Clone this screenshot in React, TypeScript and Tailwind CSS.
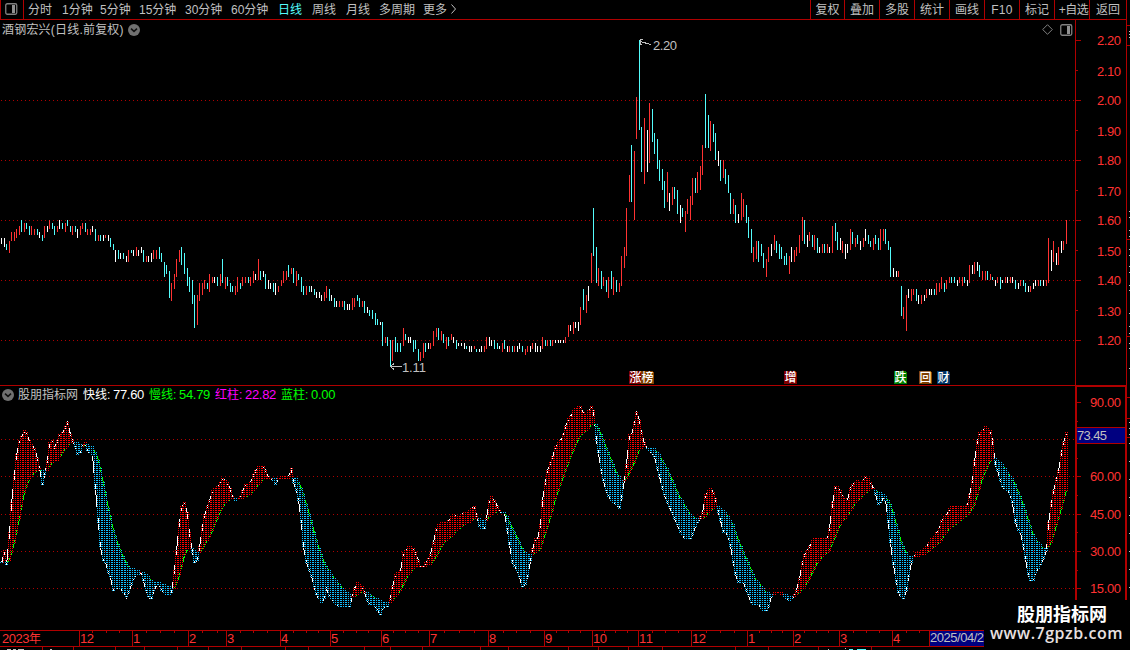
import React from "react";

const FONT = "font-['Liberation_Sans','Noto_Sans_CJK_SC',sans-serif]";
const LINE = "#b00000";
const LABEL = "#ff3232";
const MUTED = "#c0c0c0";

// x, colour (r up, c down, w flat), high-low in cents
const BARS = `
1w154-152 4w154-151 6c152-150 9r153-149 11r156-153 14r156-153 16r157-154 19r158-155 21c160-156 24r159-156
26c159-157 29c158-155 31r158-155 34r157-155 37c157-155 39w156-154 42c155-153 44r158-154 47w158-156 49r160-157
52c159-157 54c158-155 57r158-156 59w160-157 62c159-157 65r159-156 67c160-158 70c158-156 72r158-155 75c158-156
77w157-154 80r158-155 82r159-157 85c159-156 87r157-155 90r157-155 92w158-156 95c157-153 98r155-153 100c155-153
103w155-153 105r155-154 108w155-153 110c154-151 113c152-150 115w150-146 118c150-147 120w149-147 123c149-147
126w148-146 128r150-146 131c150-149 133w150-148 136r151-148 138w150-148 141w151-149 143c150-146 146r148-146
148w148-146 151w149-146 153r150-147 156r150-147 159c151-147 161c149-146 164c146-141 166c145-142 169c143-134
171r139-133 174r142-137 176r147-141 179r150-146 181c151-145 184c149-142 187c144-138 189c141-136 192c140-132
194c135-124 197r135-125 199r139-133 202r139-135 204r140-137 207c139-137 209r142-136 212r141-139 214w141-139
217c141-138 220r142-138 222c147-139 225r141-137 227c141-138 230c139-136 232c138-136 235r138-135 237r141-136
240c139-137 242r141-138 245r141-139 248c141-139 250r141-138 253r143-139 255w142-140 258r147-140 260c143-140
263w143-141 265c142-137 268w140-137 270w139-137 273c139-136 275w139-135 278r138-136 281r140-138 283r143-139
286r143-140 288c145-141 291r144-142 293c144-139 296r143-138 298c142-140 301c141-136 303c138-135 306r138-135
309c138-136 311w138-136 314c137-135 316w136-134 319w136-134 321w135-133 324r136-133 326r138-134 329c137-133
331w135-133 334c134-131 336w133-131 339r133-131 342r133-131 344c133-130 347w132-130 349w132-130 352r134-130
354r134-131 357c135-133 359c134-131 362r133-131 364c133-129 367w131-129 369c130-128 372c130-127 375c129-125
377c127-125 380w126-125 382c126-118 385r121-119 387c121-118 390c120-111 392r120-113 395c121-116 397c119-116
400c119-116 403r124-118 405c122-120 408w121-119 410w121-119 413c120-116 415c120-117 418c117-113 420r116-113
423r119-114 425c119-116 428w119-117 430r119-117 433r123-118 436r124-121 438c124-120 441r123-120 443c122-119
446r121-117 448c121-118 451r122-120 453w121-119 456c120-117 458w119-118 461w119-118 464w119-117 466c118-117
469w118-116 471w118-116 474r118-117 476c117-116 479w117-116 481w118-116 484r118-116 486r121-117 489w121-118
491w120-118 494c120-117 497c119-117 499w118-117 502r119-116 504c120-117 507w118-116 509r118-116 512c118-116
514r118-116 517w118-116 519w119-117 522c118-116 525r117-115 527r118-116 530w118-116 532r119-117 535w119-116
537w118-116 540w118-116 542r121-117 545c120-118 547r120-118 550c120-118 552r120-118 555w120-119 558w120-119
560w120-119 563w120-119 565r121-119 568r125-121 570w125-123 573r126-122 575w126-124 578w126-123 580r131-125
583c137-130 586r135-129 588w138-133 591r149-139 593c164-148 596c151-139 598r144-138 601c143-137 603r141-138
606c140-136 608r141-134 611c143-137 613r141-135 616c140-136 619r139-136 621r148-138 624r151-144 626r164-148
629r175-166 631c185-166 634r183-160 636r201-187 639c220-190 641c191-176 644r194-172 647w190-176 649r199-179
652c197-186 654c189-182 657c187-177 659c180-173 662c177-170 664c173-164 667r176-166 669w169-163 672r171-165
674c171-167 677c170-162 680w165-159 682c164-161 685r163-156 687r167-162 690r168-160 692r174-165 695c174-169
697r176-169 700r178-170 702r185-175 705c202-184 708c195-184 710r193-183 713c192-186 715c189-180 718w183-178
720c180-173 723r180-174 725c177-172 728c175-169 730c169-162 733r167-162 735c165-159 738w162-159 741r169-160
743r167-161 746c165-159 748c161-154 751c157-149 753r151-146 756r153-147 758c153-146 761c152-148 763c149-144
766r147-141 768r151-146 771w152-148 774r155-150 776c153-149 779c152-147 781c151-147 784c148-145 786c149-145
789r148-142 791w151-146 794r150-146 796r151-148 799r155-149 802r161-153 804c160-152 807w155-151 809r156-153
812c155-151 814r155-150 817c154-149 819w151-149 822r152-149 824c152-149 827r152-149 829w151-149 832r158-149
835c159-153 837c156-150 840w154-150 842r153-149 845w152-147 847w152-149 850r157-150 852c156-152 855r154-151
857c155-152 860w153-150 863r154-151 865w157-153 868c155-152 870c153-151 873r154-150 875c155-152 878c154-150
880r157-150 883r157-153 885c157-152 888c153-150 890c151-141 893w144-141 896w143-141 898r143-141 901c138-128
903r131-127 906r135-123 908w137-134 911r137-133 913r137-135 916c137-133 918w135-132 921r135-132 924w135-133
926r137-134 929w137-135 931w137-135 934c137-135 936r139-135 939r139-136 941r141-137 944c139-136 946r140-137
949r141-139 951c141-139 954c141-139 957w140-138 959r141-139 962r141-138 964c141-139 967w140-138 969r145-139
972w145-142 974r146-142 977w146-143 979c145-141 982r143-140 985r143-140 987c143-140 990r142-140 992c141-140
995w140-138 997r141-139 1000c141-137 1002w140-139 1005r141-139 1007w141-139 1010r141-139 1012w141-139
1015c140-137 1018w139-137 1020r140-138 1023c140-138 1025c139-136 1028w138-136 1030r138-136 1033w139-137
1035w140-138 1038r140-138 1040c140-138 1043w140-138 1046r140-138 1048r154-139 1051w150-143 1053r153-146
1056w149-145 1058r151-145 1061w153-149 1063r153-150 1066r160-152`;

const FAST = `
1,563 4,551 6,565 9,533 11,503 14,475 16,455 19,440 22,435 24,431 26,432 29,441 32,445 35,450 37,458 39,468 42,485
45,470 47,460 49,443 52,440 54,447 57,441 59,434 62,433 65,427 67,422 69,430 71,438 73,442 76,449 77,454 80,453
83,439 85,443 87,451 90,453 92,455 94,477 96,500 98,523 100,547 103,561 106,563 108,572 111,580 113,591 117,587
121,588 126,597 129,589 133,578 137,574 141,572 144,585 148,597 151,599 154,587 158,582 162,592 167,594 172,593
173,580 176,550 179,522 181,507 184,502 187,513 189,533 191,547 194,563 197,560 199,547 202,527 204,515 208,503
213,488 218,487 222,478 225,480 229,485 232,497 235,500 240,497 244,484 249,484 253,475 257,466 264,466 267,477
272,479 275,484 280,476 288,476 291,469 293,482 296,490 299,505 301,523 303,547 306,562 310,573 313,583 316,595
322,603 324,598 326,588 330,598 338,606 350,607 353,590 357,583 362,587 365,595 369,604 375,606 380,615 383,605
388,607 390,598 393,580 396,573 400,571 403,553 408,547 413,548 417,557 421,570 425,563 429,557 432,548 435,530
440,522 447,523 452,514 459,517 462,512 468,513 473,504 475,508 477,522 482,531 485,528 487,507 490,496 493,498
498,508 500,513 504,513 506,523 509,545 512,562 518,573 522,587 526,583 528,570 531,557 533,540 539,538 542,500
545,482 547,470 551,460 555,447 563,435 566,422 571,414 575,408 581,405 584,417 587,413 591,406 594,413 596,440
599,460 602,477 607,495 613,502 619,508 622,493 625,473 627,455 629,435 632,433 636,412 639,420 642,438 646,448
649,451 653,453 657,468 663,492 668,505 673,515 679,530 684,539 690,539 694,528 699,520 702,512 705,495 710,488
713,492 716,503 720,520 723,532 727,532 731,550 734,570 737,582 743,582 747,593 752,605 758,604 764,612 767,610
769,602 772,593 778,591 783,595 789,601 793,597 797,587 800,573 803,557 808,548 814,538 827,538 830,523 832,503
835,486 839,488 843,498 847,500 851,484 857,481 861,484 865,476 869,480 873,488 876,497 879,507 882,495 885,500
888,523 891,553 895,577 898,593 903,599 906,590 909,570 912,558 915,553 923,550 927,544 933,537 939,528 941,520
946,515 950,507 959,507 967,505 969,495 971,490 973,470 976,443 979,433 985,427 991,432 993,447 995,465 998,473
1002,487 1009,491 1012,503 1015,522 1018,530 1021,533 1024,553 1027,572 1030,581 1033,580 1036,570 1039,567
1043,558 1046,550 1047,530 1051,503 1054,483 1057,477 1060,458 1062,445 1064,438 1066,433`;

const SLOW = `
1,562 7,562 9,560 11,552 14,542 17,527 20,513 23,495 26,486 30,477 35,471 39,469 43,472 48,469 52,462 57,460 63,451
69,443 73,442 77,443 81,446 86,444 92,447 95,452 98,460 101,473 105,493 109,513 113,530 117,542 123,557 128,567
133,569 141,572 147,576 152,582 158,583 163,585 168,587 174,588 177,580 180,572 183,557 187,549 191,547 194,551
200,552 204,545 209,537 213,528 218,515 223,505 228,500 233,498 240,499 247,496 253,491 258,484 263,479 269,478
280,479 283,479 291,477 296,479 300,485 304,497 308,510 312,525 316,540 321,555 325,565 330,573 338,583 345,592
352,597 358,593 363,591 369,594 378,600 385,603 390,602 395,597 400,590 405,580 411,570 417,566 423,567 429,565
434,560 438,552 443,543 450,537 457,530 463,525 470,521 475,517 480,520 485,521 491,514 497,511 505,512 509,522
513,530 518,540 523,551 529,556 534,553 540,549 542,542 546,530 550,517 554,502 559,487 564,473 569,460 574,447
580,435 586,430 592,423 595,423 600,433 605,445 611,460 617,475 622,481 625,480 629,472 635,460 639,449 644,447
655,449 660,457 666,467 671,478 677,492 683,503 689,513 695,518 700,519 705,516 710,510 715,506 720,508 727,515
733,525 737,538 743,552 748,563 754,577 760,585 765,592 770,594 778,593 787,595 793,597 798,593 803,588 808,580
813,570 817,562 823,555 829,550 834,538 841,522 849,513 855,503 863,495 871,488 877,491 883,495 889,502 893,513
897,527 901,542 905,552 909,557 913,557 923,555 931,548 940,541 949,528 958,522 968,514 973,507 977,495 982,478
987,467 991,458 995,458 1002,465 1007,472 1013,480 1018,492 1023,505 1028,520 1033,535 1038,543 1043,548 1047,549
1051,542 1056,525 1061,508 1066,490`;

type Bar = { x: number; kind: string; top: number; height: number };

const bars: Bar[] = BARS.trim()
  .split(/\s+/)
  .map((token) => {
    const [, x, kind, hi, lo] = token.match(/(\d+)([rcw])(\d+)-(\d+)/)!;
    return { x: +x, kind, top: 220 + 3 * (160 - +hi), height: 3 * (+hi - +lo) };
  });

const barColor: Record<string, string> = { r: "#ff3232", c: "#54fcfc", w: "#ffffff" };

const parsePoints = (text: string) =>
  text
    .trim()
    .split(/\s+/)
    .map((p) => p.split(",").map(Number));

const valueAt = (points: number[][], x: number) => {
  const i = points.findIndex((p) => p[0] >= x);
  if (i <= 0) return points[0][1];
  const [x0, y0] = points[i - 1];
  const [x1, y1] = points[i];
  return Math.round(y0 + ((y1 - y0) * (x - x0)) / (x1 - x0));
};

const fast = parsePoints(FAST);
const slow = parsePoints(SLOW);
const series = bars.map(({ x }) => ({ x, f: valueAt(fast, x), s: valueAt(slow, x) }));

// every stick is a hollow box, 3px wide, with a dotted outline on black
const outlines = series
  .map(({ x, f, s }) => {
    const top = Math.min(f, s);
    const h = Math.abs(f - s) + 1;
    return `M${x - 1} ${top}h1v${h}h-1zM${x + 1} ${top}h1v${h}h-1zM${x} ${top}h1v1h-1zM${x} ${top + h - 1}h1v1h-1z`;
  })
  .join("");

const dots = (rising: boolean) =>
  series
    .filter(({ f, s }) => (rising ? f <= s : f > s))
    .map(({ x, f, s }) => {
      let d = "";
      const from = Math.min(f, s);
      const to = Math.max(f, s);
      for (let y = from - (from % 2 ? 1 : 0); y <= to; y += 2) {
        d += `M${x - 1} ${y}h1v1h-1zM${x + 1} ${y}h1v1h-1z`;
      }
      return d;
    })
    .join("");

const redDots = dots(true);
const blueDots = dots(false);
const linePoints = (key: "f" | "s") => series.map((p) => `${p.x + 0.5},${p[key] + 0.5}`).join(" ");

const periods = [
  { name: "分时", width: "w-[34px]" },
  { name: "1分钟", width: "w-[38px]" },
  { name: "5分钟", width: "w-[39px]" },
  { name: "15分钟", width: "w-[46px]" },
  { name: "30分钟", width: "w-[46px]" },
  { name: "60分钟", width: "w-[47px]" },
  { name: "日线", width: "w-[34px]", active: true },
  { name: "周线", width: "w-[34px]" },
  { name: "月线", width: "w-[33px]" },
  { name: "多周期", width: "w-[44px]" },
  { name: "更多", width: "w-[27px]" },
];

const tools = [
  { name: "复权", width: "w-[34px]" },
  { name: "叠加", width: "w-[35px]" },
  { name: "多股", width: "w-[35px]" },
  { name: "统计", width: "w-[35px]" },
  { name: "画线", width: "w-[35px]" },
  { name: "F10", width: "w-[35px] tracking-wide" },
  { name: "标记", width: "w-[35px]" },
  { name: "+自选", width: "w-[35px] pl-[3px] tracking-[-0.5px]" },
  { name: "返回", width: "w-[37px]" },
];

const badges = [
  { x: 629, text: "涨", fill: "#800000" },
  { x: 641, text: "榜", fill: "#804000" },
  { x: 784, text: "增", fill: "#800000" },
  { x: 894, text: "跌", fill: "#008000" },
  { x: 919, text: "回", fill: "#804000" },
  { x: 937, text: "财", fill: "#003366" },
];

const months = [
  [79, "12"],
  [132, "1"],
  [188, "2"],
  [226, "3"],
  [280, "4"],
  [330, "5"],
  [381, "6"],
  [429, "7"],
  [488, "8"],
  [544, "9"],
  [592, "10"],
  [638, "11"],
  [691, "12"],
  [747, "1"],
  [793, "2"],
  [839, "3"],
  [892, "4"],
] as [number, string][];

const weekTicks = [
  92, 106, 119, 146, 160, 174, 202, 217, 240, 253, 267, 293, 306, 318, 343, 356, 368, 393, 405, 418, 444, 459, 474, 503,
  516, 530, 556, 568, 580, 604, 615, 627, 652, 665, 678, 706, 720, 734, 759, 771, 782, 804, 816, 828, 853, 866, 879,
  906, 919,
];

const tabTicks = [42, 73, 115, 144, 177, 208, 241, 285, 308, 364, 390, 422, 480, 508, 568, 598, 628, 662, 735, 768, 818, 871];

const stripMarks = [
  31, 34, 37, 211, 217, 230, 236, 249, 255, 266, 272, 285, 290, 313, 326, 333, 343, 348, 368, 422, 428, 434, 443, 461,
  479, 497, 515, 533, 551, 569, 587,
];

function PanelIcon() {
  return (
    <svg width="13" height="12" viewBox="0 0 13 12" className="shrink-0">
      <rect x="0.75" y="0.75" width="11" height="10.5" rx="1.5" fill="none" stroke="#808080" strokeWidth="1.3" />
      <rect x="7" y="2" width="3" height="8" fill="#909090" />
    </svg>
  );
}

function ChevronBadge() {
  return (
    <svg width="12" height="12" viewBox="0 0 12 12" className="shrink-0">
      <circle cx="6" cy="6" r="6" fill="#707070" />
      <path d="M3 4.6 L6 7.4 L9 4.6" fill="none" stroke="#101010" strokeWidth="1.5" />
    </svg>
  );
}

function GridLine({ y }: { y: number }) {
  return <path d={`M1 ${y + 0.5}H1075`} stroke={LINE} strokeDasharray="1 3" shapeRendering="crispEdges" />;
}

function Toolbar() {
  return (
    <header className="flex h-5 w-[1127px] items-stretch border-b border-[#b00000] text-xs leading-[19px] text-[#c0c0c0]">
      <div className="flex w-6 items-center border-x border-[#b00000] pb-0.5 pl-1">
        <PanelIcon />
      </div>
      <nav className="flex flex-1 pt-px pl-1">
        {periods.map((p) => (
          <button
            key={p.name}
            className={`shrink-0 text-left whitespace-nowrap ${p.width} ${p.active ? "text-[#54fcfc]" : ""}`}
          >
            {p.name}
          </button>
        ))}
        <svg width="8" height="12" viewBox="0 0 8 12" className="mt-0.5">
          <path d="M1.5 1.5 L5.5 6 L1.5 10.5" fill="none" stroke={MUTED} />
        </svg>
      </nav>
      <div className="flex border-r border-[#b00000]">
        {tools.map((tool) => (
          <button
            key={tool.name}
            className={`border-l border-[#b00000] pt-px text-center whitespace-nowrap ${tool.width}`}
          >
            {tool.name}
          </button>
        ))}
      </div>
    </header>
  );
}

function PriceChart() {
  return (
    <section className="h-[366px] border-b border-[#b00000]">
      <div className="flex h-[18px] items-center pt-px pr-0.5 pl-0.5 text-xs text-[#c0c0c0]">
        <span className="w-[126px] tracking-[0.2px] whitespace-nowrap">酒钢宏兴(日线.前复权)</span>
        <ChevronBadge />
        <svg width="11" height="11" viewBox="0 0 11 11" className="mr-[7px] ml-auto">
          <path d="M5.5 0.7 L10.3 5.5 L5.5 10.3 L0.7 5.5 Z" fill="none" stroke="#808080" />
        </svg>
        <PanelIcon />
      </div>
      <svg width="1075" height="347" viewBox="0 38 1075 347" className="block">
        {[100, 160, 220, 280, 340].map((y) => (
          <GridLine key={y} y={y} />
        ))}
        {bars.map((b) => (
          <rect
            key={b.x}
            x={b.x}
            y={b.top}
            width="1"
            height={b.height}
            fill={barColor[b.kind]}
            shapeRendering="crispEdges"
          />
        ))}
        <g stroke={MUTED} fill="none" shapeRendering="crispEdges">
          <path d="M640 41.5 L651 44.5 M643 39.5 H640 V44 L642 45" />
          <path d="M391 366.5 H402 M394 363.5 L390.5 366.5 L394 369.5" />
        </g>
        <text x="653" y="50" fontSize="13" fill={MUTED} textLength="24">
          2.20
        </text>
        <text x="402" y="372" fontSize="13" fill={MUTED} textLength="24">
          1.11
        </text>
        {badges.map((b) => (
          <g key={b.text}>
            <path d={`M${b.x} 371h12v1h1v12h-13z`} fill={b.fill} />
            <text x={b.x + 0.5} y="382" fontSize="12" fontWeight="500" fill="#fff">
              {b.text}
            </text>
          </g>
        ))}
      </svg>
    </section>
  );
}

function Indicator() {
  return (
    <section>
      <div className="flex h-4 items-center pt-px pl-0.5 text-xs whitespace-nowrap">
        <ChevronBadge />
        <span className="ml-1 w-[65px] text-[#c0c0c0]">股朋指标网</span>
        <span className="w-[30px] text-white">快线:</span>
        <span className="w-9 text-[13px] tracking-[-0.3px] text-white">77.60</span>
        <span className="w-[30px] text-[#00ff00]">慢线:</span>
        <span className="w-9 text-[13px] tracking-[-0.3px] text-[#00ff00]">54.79</span>
        <span className="w-[30px] text-[#ff00ff]">红柱:</span>
        <span className="w-9 text-[13px] tracking-[-0.3px] text-[#ff00ff]">22.82</span>
        <span className="w-[30px] text-[#00ff00]">蓝柱:</span>
        <span className="text-[13px] tracking-[-0.3px] text-[#00ff00]">0.00</span>
      </div>
      <svg width="1075" height="228" viewBox="0 402 1075 228" className="block">
        {[439, 476, 514, 551, 588].map((y) => (
          <GridLine key={y} y={y} />
        ))}
        <g shapeRendering="crispEdges">
          <polyline points={linePoints("f")} fill="none" stroke="#ffffff" />
          <polyline points={linePoints("s")} fill="none" stroke="#00ff00" />
          <path d={outlines} fill="#000000" fillRule="nonzero" />
          <path d={redDots} fill="#ff0000" />
          <path d={blueDots} fill="#10bfff" />
        </g>
      </svg>
    </section>
  );
}

function ValueAxis() {
  const prices = Array.from({ length: 11 }, (_, i) => 220 - i * 10);
  const levels = [
    [402, "90.00"],
    [476, "60.00"],
    [514, "45.00"],
    [551, "30.00"],
    [588, "15.00"],
  ] as [number, string][];
  return (
    <svg width="55" height="610" viewBox="1075 20 55 610" className="block">
      <g fill={LINE} shapeRendering="crispEdges">
        <rect x="1075" y="20" width="1" height="610" />
        <rect x="1126" y="20" width="1" height="610" />
        <rect x="1075" y="385" width="52" height="2" />
        <rect x="1076" y="386" width="1" height="244" />
        <rect x="1125" y="386" width="1" height="244" />
        {prices.map((p, i) => (
          <rect key={p} x="1076" y={40 + i * 30} width={i % 2 ? 2 : 5} height="1" />
        ))}
        {[402, 439, 476, 514, 551, 588].map((y) => (
          <rect key={y} x="1077" y={y} width="4" height="1" />
        ))}
        {[421, 458, 495, 532, 570].map((y) => (
          <rect key={y} x="1077" y={y} width="1" height="1" />
        ))}
        {[25, 45, 239, 336, 397, 418, 437].map((y) => (
          <rect key={y} x="1127" y={y} width="3" height="1" />
        ))}
      </g>
      <g fill={MUTED} shapeRendering="crispEdges">
        {stripMarks.map((y) => (
          <rect key={y} x="1129" y={y} width="1" height="1" />
        ))}
      </g>
      <g fill={LABEL} fontSize="13">
        {prices.map((p, i) => (
          <text key={p} x="1097" y={45 + i * 30 + (i % 2)} textLength="24">
            {(p / 100).toFixed(2)}
          </text>
        ))}
        {levels.map(([y, text]) => (
          <text key={text} x="1090" y={y + 5} textLength="31">
            {text}
          </text>
        ))}
      </g>
      <rect x="1076" y="427" width="50" height="17" fill={LINE} />
      <rect x="1077" y="428" width="48" height="15" fill="#000080" />
      <text x="1077" y="440" fontSize="13" fill={MUTED} textLength="30">
        73.45
      </text>
    </svg>
  );
}

function TimeAxis() {
  return (
    <svg width="1130" height="20" viewBox="0 630 1130 20" className="block">
      <g fill={LINE} shapeRendering="crispEdges">
        <rect x="0" y="630" width="1130" height="1" />
        <rect x="0" y="646" width="1130" height="1" />
        {months.map(([x]) => (
          <rect key={x} x={x} y="631" width="1" height="15" />
        ))}
        {weekTicks.map((x) => (
          <rect key={x} x={x} y="631" width="1" height="2" />
        ))}
        {tabTicks.map((x) => (
          <rect key={x} x={x} y="647" width="1" height="3" />
        ))}
        <rect x="929" y="631" width="1" height="15" />
      </g>
      <path
        d="M7 649.5h4M13 649.5h3M18 649.5h6M50 649.5h2M828 649.5h1M845 648.5h1"
        stroke={MUTED}
        shapeRendering="crispEdges"
      />
      <path d="M849 649.5h4M857 649.5h9" stroke="#54fcfc" shapeRendering="crispEdges" />
      <g fill={LABEL} fontSize="13">
        <text x="2" y="643" textLength="39">
          2023<tspan fontSize="12">年</tspan>
        </text>
        {months.map(([x, text]) => (
          <text key={x} x={x + 1} y="643" textLength={text.length > 1 ? 14 : undefined}>
            {text}
          </text>
        ))}
      </g>
      <rect x="930" y="631" width="60" height="15" fill="#000080" />
      <text x="930" y="642" fontSize="13" fill={MUTED} textLength="54">
        2025/04/2
      </text>
    </svg>
  );
}

function Watermark() {
  return (
    <div className="absolute top-[600px] left-[984px] h-[50px] w-[146px] bg-black pt-[5px] text-white">
      <div className="pl-[33px] text-[18px] leading-5 font-bold whitespace-nowrap">股朋指标网</div>
      <div className="pl-1.5 font-['Open_Sans','Noto_Sans',sans-serif] text-[16px] leading-[17px] font-semibold tracking-[0.5px] whitespace-nowrap text-[#e8e0e0]">
        www.7gpzb.com
      </div>
    </div>
  );
}

export default function App() {
  return (
    <div className={`relative h-[650px] w-[1130px] overflow-hidden bg-black ${FONT}`}>
      <Toolbar />
      <main className="flex">
        <div className="w-[1075px]">
          <PriceChart />
          <Indicator />
        </div>
        <ValueAxis />
      </main>
      <TimeAxis />
      <Watermark />
    </div>
  );
}
